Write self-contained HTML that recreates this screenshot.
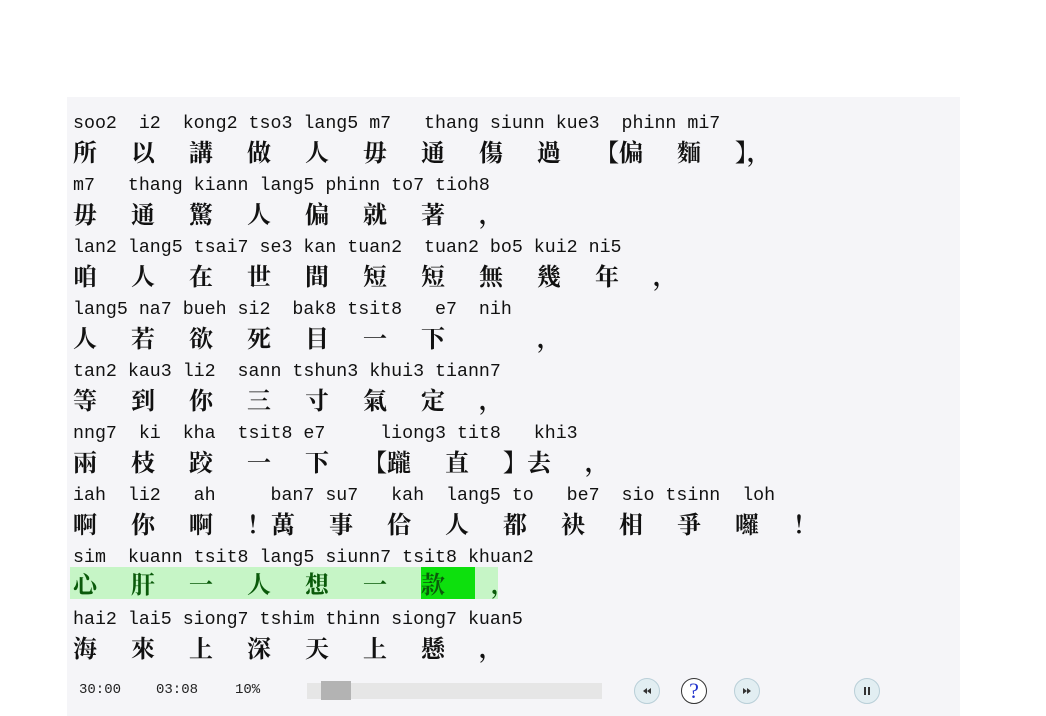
<!DOCTYPE html>
<html><head><meta charset="utf-8"><style>
html,body{margin:0;padding:0;background:#fff;width:1046px;height:716px;overflow:hidden}
#p{position:absolute;left:67px;top:97px;width:893px;height:619px;background:#f5f5f8}
.r{position:absolute;left:6px;font:18.3px/20px "Liberation Mono",monospace;white-space:pre;color:#111}
.c{position:absolute;left:6px;height:32px;font:bold 24px/32px "Noto Serif CJK SC","Noto Serif CJK SC",serif;white-space:nowrap;color:#111}
.c span{display:inline-block;margin-right:34px}
.hl{background:#c6f5c6;color:#0a5a0a;left:3px;padding-left:3px;width:425px}
.hl span.k{background:#0de00d;margin-right:0;padding-right:30px}
.t{position:absolute;top:585px;font:14px "Liberation Mono",monospace;color:#222}
.b{position:absolute;top:581px;width:26px;height:26px;border-radius:50%;background:#e2eef2;border:1px solid #b9cfd8;box-sizing:border-box}
</style></head><body><div id="p">
<div class="r" style="top:17px">soo2  i2  kong2 tso3 lang5 m7   thang siunn kue3  phinn mi7</div>
<div class="c" style="top:38px"><span>所</span><span>以</span><span>講</span><span>做</span><span>人</span><span>毋</span><span>通</span><span>傷</span><span>過</span><span>【偏</span><span>麵</span><span>】，</span></div>
<div class="r" style="top:79px">m7   thang kiann lang5 phinn to7 tioh8</div>
<div class="c" style="top:100px"><span>毋</span><span>通</span><span>驚</span><span>人</span><span>偏</span><span>就</span><span>著</span><span>，</span></div>
<div class="r" style="top:141px">lan2 lang5 tsai7 se3 kan tuan2  tuan2 bo5 kui2 ni5</div>
<div class="c" style="top:162px"><span>咱</span><span>人</span><span>在</span><span>世</span><span>間</span><span>短</span><span>短</span><span>無</span><span>幾</span><span>年</span><span>，</span></div>
<div class="r" style="top:203px">lang5 na7 bueh si2  bak8 tsit8   e7  nih</div>
<div class="c" style="top:224px"><span>人</span><span>若</span><span>欲</span><span>死</span><span>目</span><span>一</span><span>下</span><span>　</span><span>，</span></div>
<div class="r" style="top:265px">tan2 kau3 li2  sann tshun3 khui3 tiann7</div>
<div class="c" style="top:286px"><span>等</span><span>到</span><span>你</span><span>三</span><span>寸</span><span>氣</span><span>定</span><span>，</span></div>
<div class="r" style="top:327px">nng7  ki  kha  tsit8 e7     liong3 tit8   khi3</div>
<div class="c" style="top:348px"><span>兩</span><span>枝</span><span>跤</span><span>一</span><span>下</span><span>【躘</span><span>直</span><span>】去</span><span>，</span></div>
<div class="r" style="top:389px">iah  li2   ah     ban7 su7   kah  lang5 to   be7  sio tsinn  loh</div>
<div class="c" style="top:410px"><span>啊</span><span>你</span><span>啊</span><span>！萬</span><span>事</span><span>佮</span><span>人</span><span>都</span><span>袂</span><span>相</span><span>爭</span><span>囉</span><span>！</span></div>
<div class="r" style="top:451px">sim  kuann tsit8 lang5 siunn7 tsit8 khuan2</div>
<div class="c hl" style="top:470px"><span>心</span><span>肝</span><span>一</span><span>人</span><span>想</span><span>一</span><span class="k">款</span><span style="margin-left:16px">，</span></div>
<div class="r" style="top:513px">hai2 lai5 siong7 tshim thinn siong7 kuan5</div>
<div class="c" style="top:534px"><span>海</span><span>來</span><span>上</span><span>深</span><span>天</span><span>上</span><span>懸</span><span>，</span></div>
<div class="t" style="left:12px">30:00</div><div class="t" style="left:89px">03:08</div><div class="t" style="left:168px">10%</div>
<div style="position:absolute;left:240px;top:586px;width:295px;height:16px;background:#e6e6e6"></div>
<div style="position:absolute;left:254px;top:584px;width:30px;height:19px;background:#b3b3b3"></div>
<div class="b" style="left:567px"><svg width="24" height="24" viewBox="0 0 24 24"><path d="M8 12l4-3v6zM12 12l4-3v6z" fill="#333"/></svg></div>
<div class="b" style="left:614px;background:#fff;border:1px solid #333;color:#2233cc;font:22px/24px 'Liberation Serif',serif;text-align:center">?</div>
<div class="b" style="left:667px"><svg width="24" height="24" viewBox="0 0 24 24"><path d="M8 9l4 3-4 3zM12 9l4 3-4 3z" fill="#333"/></svg></div>
<div class="b" style="left:787px"><svg width="24" height="24" viewBox="0 0 24 24"><path d="M9 8h2v8H9zM13 8h2v8h-2z" fill="#333"/></svg></div>
</div></body></html>
